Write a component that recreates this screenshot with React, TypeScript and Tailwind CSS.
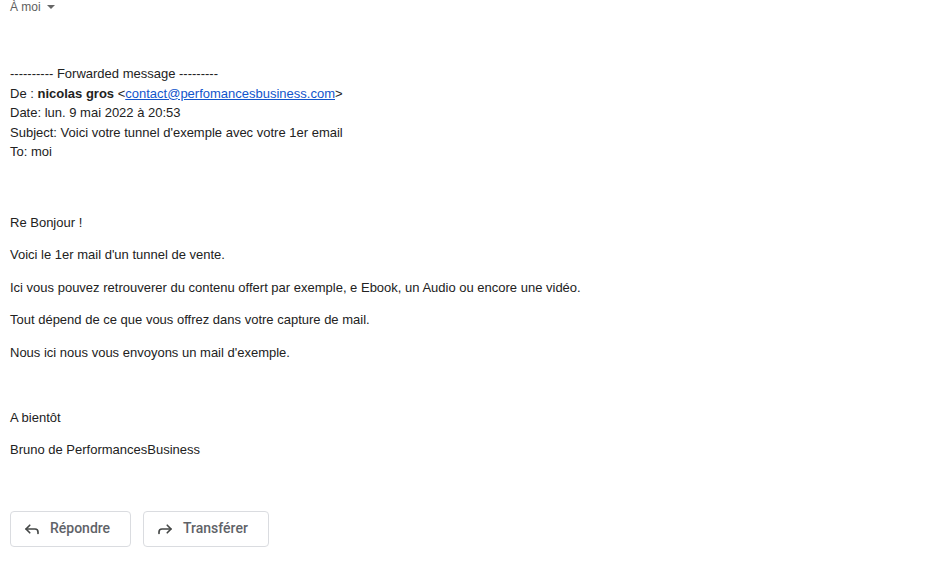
import { Reply, Forward } from "lucide-react";

function Para({ children }: { children: React.ReactNode }) {
  return <p className="mb-[13px] leading-[19.5px]">{children}</p>;
}

export default function App() {
  return (
    <div className="w-[935px] h-[561px] overflow-hidden bg-white font-['Liberation_Sans',Arial,sans-serif] text-[13px] text-[#222222]">
      <div className="pl-[10px] -mt-[1px] flex items-center gap-[6px] text-[12px] text-[#5e5e5e] leading-[16px]">
        <span>À moi</span>
        <span className="w-0 h-0 border-l-[4px] border-r-[4px] border-t-[4px] border-l-transparent border-r-transparent border-t-[#666]" />
      </div>

      <div className="pl-[10px] mt-[49px] leading-[19.5px]">
        <div>---------- Forwarded message ---------</div>
        <div>
          De : <b>nicolas gros</b> &lt;
          <a href="#" className="text-[#1155cc] underline">contact@perfomancesbusiness.com</a>&gt;
        </div>
        <div>Date: lun. 9 mai 2022 à 20:53</div>
        <div>Subject: Voici votre tunnel d'exemple avec votre 1er email</div>
        <div>To: moi</div>
      </div>

      <div className="pl-[10px] mt-[51px]">
        <Para>Re Bonjour !</Para>
        <Para>Voici le 1er mail d'un tunnel de vente.</Para>
        <Para>Ici vous pouvez retrouverer du contenu offert par exemple, e Ebook, un Audio ou encore une vidéo.</Para>
        <Para>Tout dépend de ce que vous offrez dans votre capture de mail.</Para>
        <Para>Nous ici nous vous envoyons un mail d'exemple.</Para>
        <Para>
          <br />
        </Para>
        <Para>A bientôt</Para>
        <Para>Bruno de PerformancesBusiness</Para>
      </div>

      <div className="pl-[10px] mt-[51px] flex gap-[12px] font-['Roboto',Arial,sans-serif] text-[14px] font-medium text-[#5f6368]">
        <button className="h-[36px] w-[121px] pl-[12px] flex items-center gap-[9px] rounded-[4px] border border-[#dadce0] bg-white">
          <Reply size={18} strokeWidth={2.2} className="text-[#444746]" />
          Répondre
        </button>
        <button className="h-[36px] w-[126px] pl-[12px] flex items-center gap-[9px] rounded-[4px] border border-[#dadce0] bg-white">
          <Forward size={18} strokeWidth={2.2} className="text-[#444746]" />
          Transférer
        </button>
      </div>
    </div>
  );
}
